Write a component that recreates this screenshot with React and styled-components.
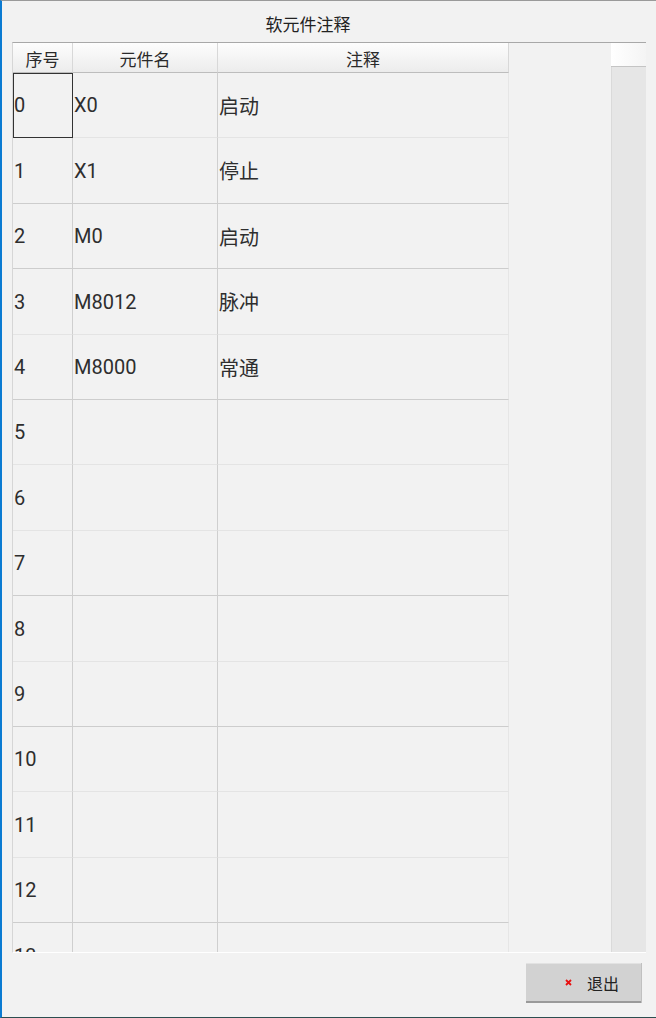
import React from 'react'
import styled, { createGlobalStyle } from 'styled-components'

const GlobalStyle = createGlobalStyle`
  html, body {
    margin: 0;
    padding: 0;
    background: #f2f2f2;
  }
  * {
    box-sizing: border-box;
  }
`

const rows = [
  { no: '0', name: 'X0', note: '启动' },
  { no: '1', name: 'X1', note: '停止' },
  { no: '2', name: 'M0', note: '启动' },
  { no: '3', name: 'M8012', note: '脉冲' },
  { no: '4', name: 'M8000', note: '常通' },
  { no: '5' }, { no: '6' }, { no: '7' }, { no: '8' }, { no: '9' },
  { no: '10' }, { no: '11' }, { no: '12' }, { no: '13' },
]

// rows whose bottom line shows darker in the original (fractional row height)
const darkLines = [1, 2, 4, 7, 9, 12, 13]

const ROW = 65.4

function rowHeight(i) {
  return Math.round(ROW * (i + 1)) - Math.round(ROW * i)
}

function App() {
  return (
    <>
      <GlobalStyle />
      <Window>
        <TitleBar>软元件注释</TitleBar>
        <TableArea>
          <Grid>
            <HeaderRow>
              <HeadCell $w={60}>序号</HeadCell>
              <HeadCell $w={145}>元件名</HeadCell>
              <HeadCell $w={291}>注释</HeadCell>
            </HeaderRow>
            {rows.map((r, i) => (
              <Row key={r.no} style={{ height: rowHeight(i) }}>
                <Cell $w={60} $dark={darkLines.includes(i)} $selected={i === 0}>{r.no}</Cell>
                <Cell $w={145} $dark={darkLines.includes(i)}>{r.name}</Cell>
                <Cell $w={291} $dark={darkLines.includes(i)} $last>{r.note}</Cell>
              </Row>
            ))}
          </Grid>
          <ScrollBar>
            <Corner />
            <Track />
          </ScrollBar>
        </TableArea>
        <Footer>
          <ExitButton>
            <svg width="7" height="7" viewBox="0 0 7 7">
              <path d="M1 1 L6 6 M6 1 L1 6" stroke="#e81010" strokeWidth="1.8" />
            </svg>
            <span>退出</span>
          </ExitButton>
        </Footer>
      </Window>
    </>
  )
}

const Window = styled.div`
  width: 656px;
  height: 1018px;
  display: flex;
  flex-direction: column;
  background: #f2f2f2;
  border-left: 2px solid #0b7bd2;
  border-top: 1px solid #9a9a9a;
  border-bottom: 1px solid #2d4e50;
  font-family: Roboto, "Noto Sans CJK SC", sans-serif;
  color: #2e2e2e;
`

const TitleBar = styled.div`
  height: 41px;
  flex: none;
  display: flex;
  align-items: center;
  justify-content: center;
  padding: 4px 42px 0 0;
  font-size: 17px;
  color: #222;
`

const TableArea = styled.div`
  height: 911px;
  flex: none;
  margin: 0 10px;
  display: flex;
  border-top: 1px solid #a8a8a8;
  border-bottom: 1px solid #ffffff;
  border-left: 1px solid #d6d6d6;
  overflow: hidden;
`

const Grid = styled.div`
  flex: 1;
  display: flex;
  flex-direction: column;
  overflow: hidden;
`

const HeaderRow = styled.div`
  height: 30px;
  flex: none;
  display: flex;
`

const HeadCell = styled.div`
  width: ${p => p.$w}px;
  height: 30px;
  display: flex;
  align-items: center;
  justify-content: center;
  padding-top: 2px;
  font-size: 17px;
  color: #2a2a2a;
  background: linear-gradient(#fdfdfd, #ececec);
  border-right: 1px solid #d8d8d8;
  border-bottom: 1px solid #bdbdbd;
`

const Row = styled.div`
  flex: none;
  display: flex;
`

const Cell = styled.div`
  width: ${p => p.$w}px;
  height: 100%;
  display: flex;
  align-items: center;
  padding-left: 1px;
  font-size: 20px;
  border-right: 1px solid ${p => (p.$last ? '#e6e6e6' : '#cfcfcf')};
  border-bottom: 1px solid ${p => (p.$dark ? '#cdcdcd' : '#e4e4e4')};
  outline: ${p => (p.$selected ? '1px solid #333' : 'none')};
  outline-offset: -1px;
`

const ScrollBar = styled.div`
  width: 35px;
  flex: none;
  display: flex;
  flex-direction: column;
`

const Corner = styled.div`
  height: 24px;
  flex: none;
  background: linear-gradient(90deg, #ffffff, #f4f4f4);
  border-bottom: 1px solid #c4c4c4;
`

const Track = styled.div`
  flex: 1;
  background: #e6e6e6;
  border-left: 1px solid #dadada;
`

const Footer = styled.div`
  flex: 1;
  display: flex;
  justify-content: flex-end;
  align-items: flex-start;
  padding: 10px 15px 0 0;
`

const ExitButton = styled.button`
  width: 115px;
  height: 40px;
  display: flex;
  align-items: center;
  justify-content: flex-start;
  gap: 15px;
  padding: 0 0 0 39px;
  background: #d2d2d2;
  border: none;
  border-top: 1px solid #e2e2e2;
  border-bottom: 2px solid #9a9a9a;
  box-shadow: 1px 0 0 #c0c0c0;
  font-family: "Noto Sans CJK SC", sans-serif;
  font-size: 16px;
  color: #222;
`

export default App
